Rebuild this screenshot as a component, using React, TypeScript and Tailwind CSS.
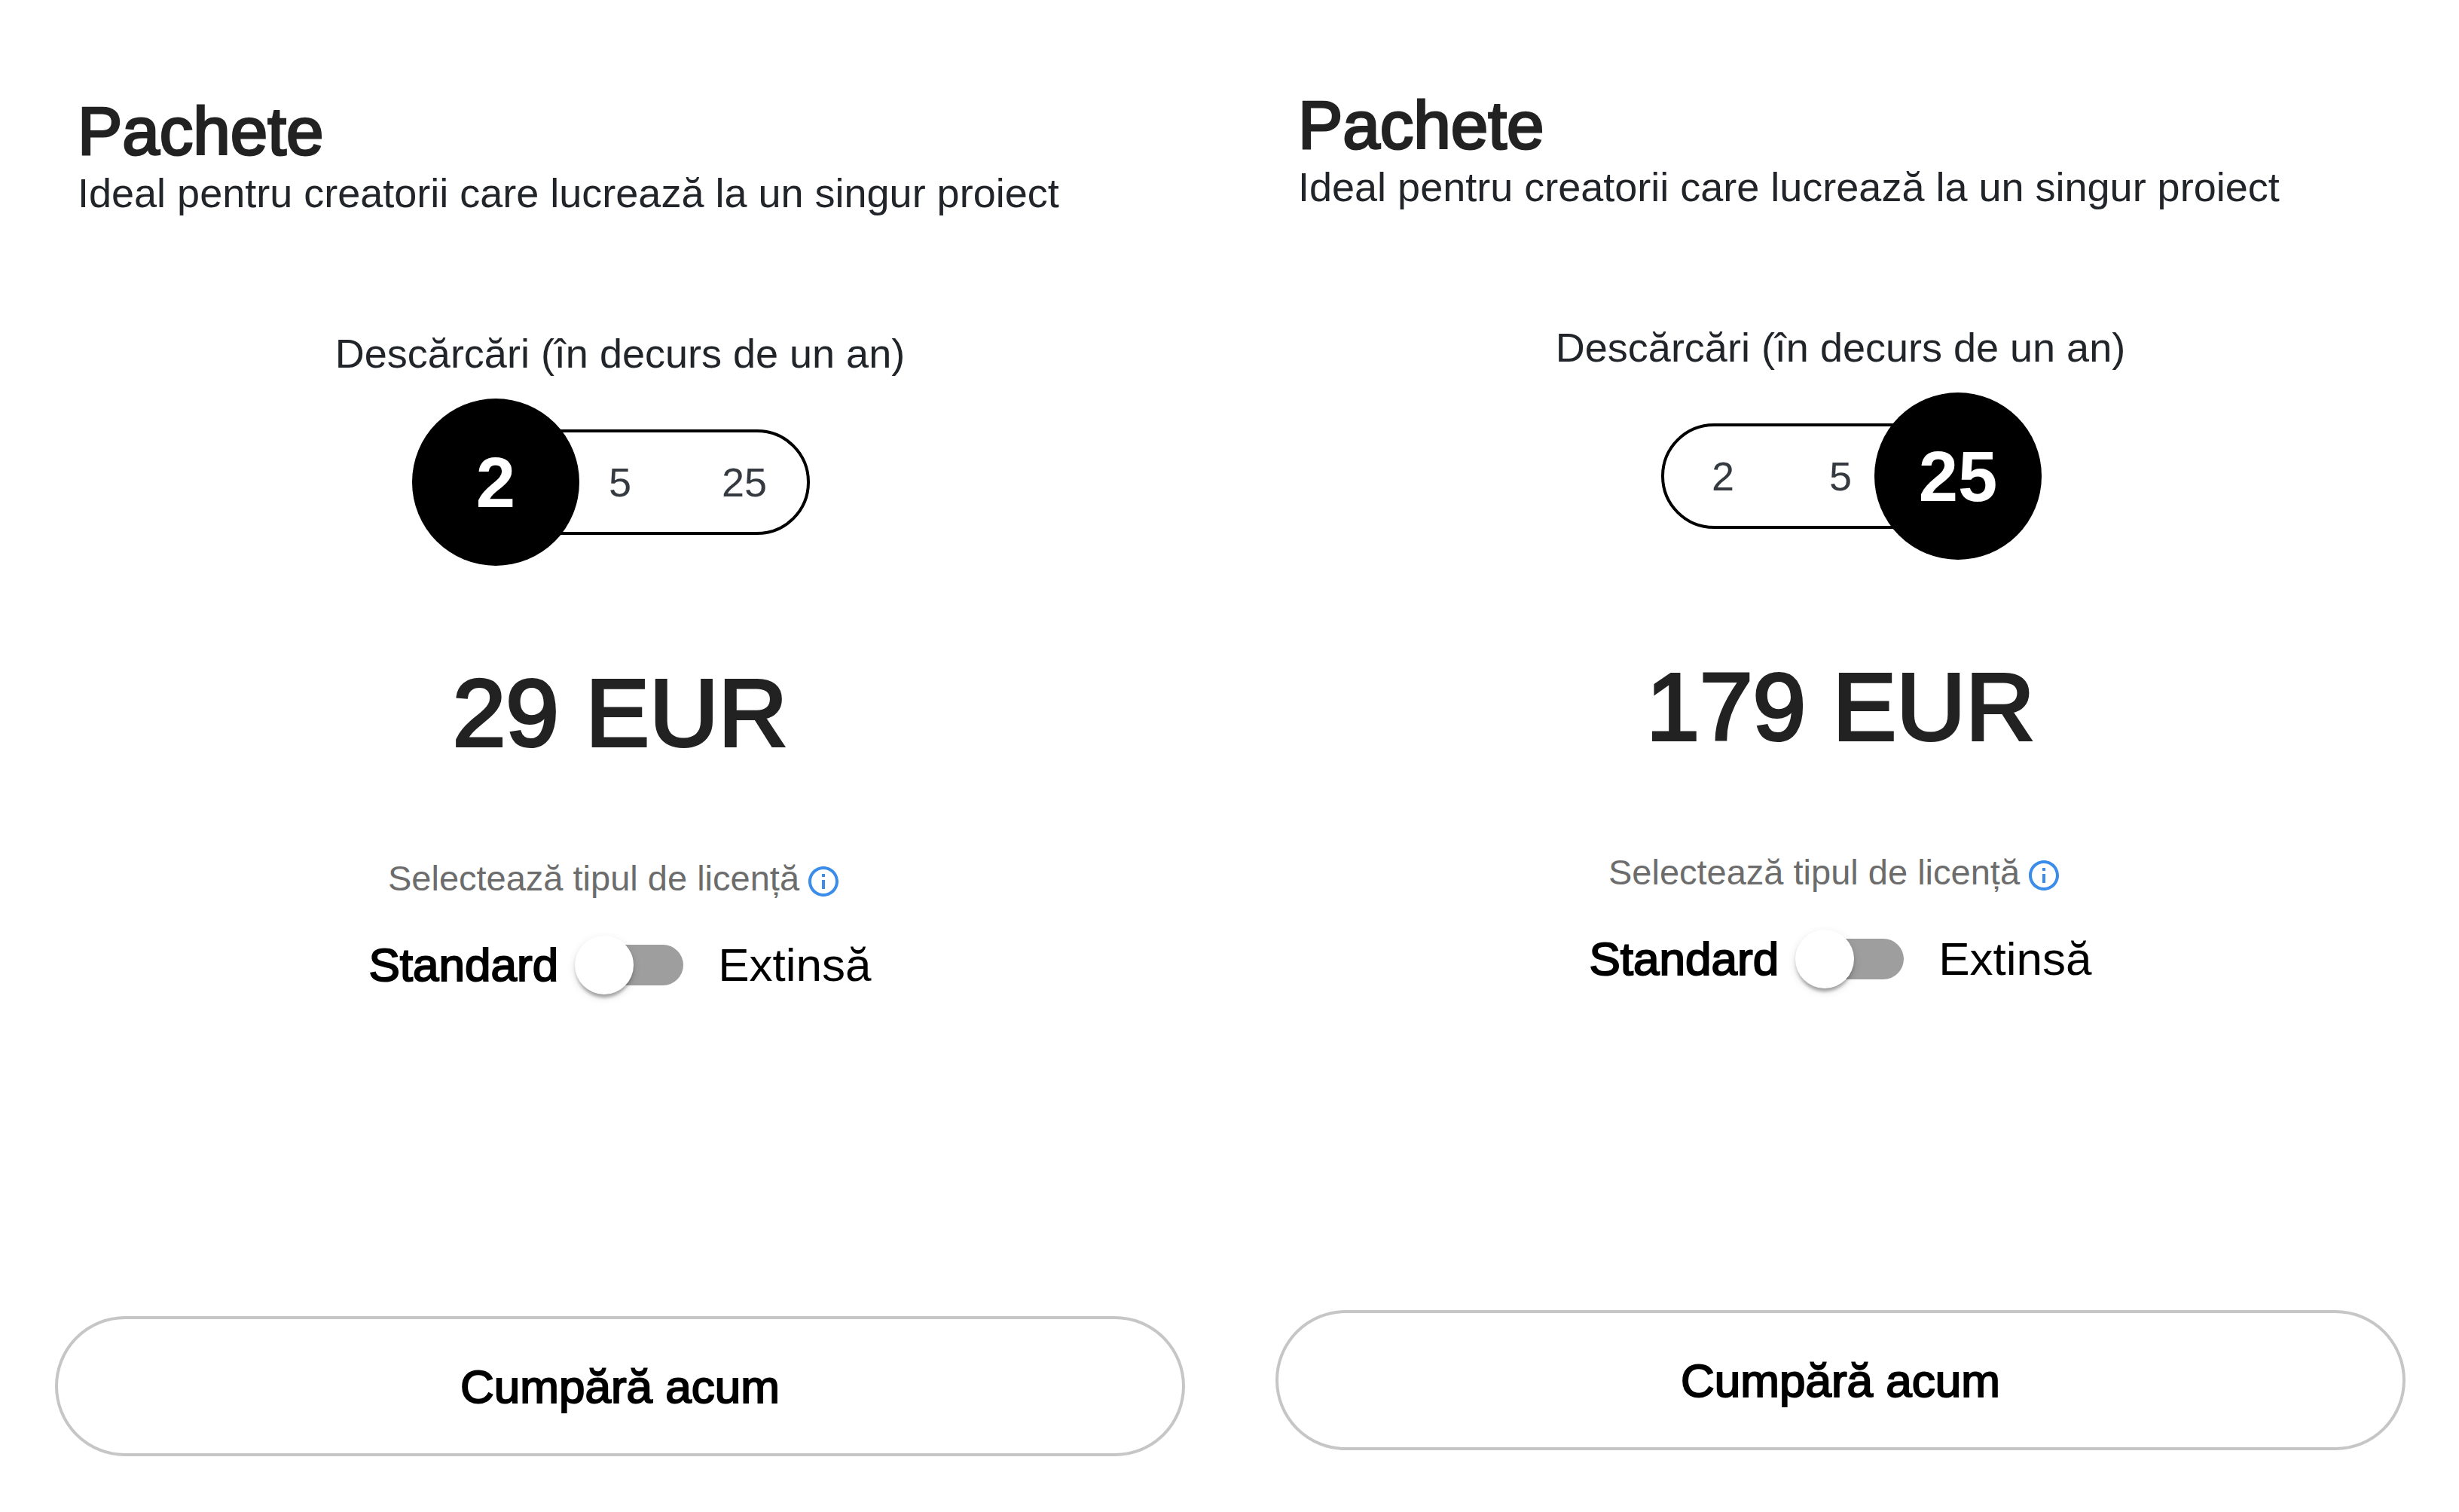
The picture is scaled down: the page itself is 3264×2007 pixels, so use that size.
import * as React from 'react';
import clsx from 'clsx';
import { MdInfoOutline } from 'react-icons/md';

interface Plan {
  id: string;
  downloads: number;
  cardClass: string;
  columnsClass: string;
}

const OPTIONS = [2, 5, 25];

const PRICES: Record<number, number> = { 2: 29, 5: 49, 25: 179 };

const PLANS: Plan[] = [
  { id: 'mic', downloads: 2, cardClass: 'pt-[124px]', columnsClass: 'grid-cols-[repeat(3,165px)]' },
  { id: 'mare', downloads: 25, cardClass: 'pt-[116px]', columnsClass: 'grid-cols-[repeat(3,156px)]' },
];

const DownloadPicker: React.FC<{
  name: string;
  value: number;
  columnsClass: string;
  onChange: (value: number) => void;
}> = ({ name, value, columnsClass, onChange }) => (
  <fieldset className="flex flex-col items-center">
    <legend className="mx-auto mb-[69px] text-[54px] leading-[64px] text-[#212529]">
      Descărcări (în decurs de un an)
    </legend>
    <div className={clsx('grid h-[140px] rounded-full border-4 border-black', columnsClass)}>
      {OPTIONS.map((option) => (
        <div key={option} className="flex min-h-0 items-center justify-center">
          <label
            className={clsx(
              'relative flex shrink-0 cursor-pointer items-center justify-center rounded-full',
              option === value
                ? 'z-10 size-[222px] bg-black text-[94px] font-bold text-white'
                : 'text-[54px] text-[#343a40]'
            )}
          >
            <input
              type="radio"
              name={name}
              value={option}
              checked={option === value}
              onChange={() => onChange(option)}
              className="sr-only"
            />
            {option}
          </label>
        </div>
      ))}
    </div>
  </fieldset>
);

const LicenseSwitch: React.FC<{ id: string }> = ({ id }) => {
  const [extended, setExtended] = React.useState(false);

  return (
    <div className="mt-[51px] flex items-center justify-center text-[62px] leading-[72px] text-black">
      <label htmlFor={id} className={clsx(!extended && '[-webkit-text-stroke:2px_black]')}>
        Standard
      </label>
      <input
        id={id}
        type="checkbox"
        role="switch"
        checked={extended}
        onChange={(e) => setExtended(e.target.checked)}
        className="relative mr-[46px] ml-[34px] h-[54px] w-[132px] cursor-pointer appearance-none rounded-full bg-[#9e9e9e] before:absolute before:-top-3 before:-left-3 before:size-[78px] before:rounded-full before:bg-white before:shadow-[0_8px_4px_-4px_rgba(0,0,0,0.2),0_4px_4px_rgba(0,0,0,0.14),0_4px_12px_rgba(0,0,0,0.12)] checked:before:left-16"
      />
      <label htmlFor={id} className={clsx(extended && '[-webkit-text-stroke:2px_black]')}>
        Extinsă
      </label>
    </div>
  );
};

const PlanCard: React.FC<{ plan: Plan }> = ({ plan }) => {
  const [downloads, setDownloads] = React.useState(plan.downloads);

  return (
    <section className={clsx('flex flex-col', plan.cardClass)}>
      <header className="mb-[149px] pl-[30px]">
        <h2 className="text-[89px] leading-[100px] text-[#222] [-webkit-text-stroke:3px_#222]">Pachete</h2>
        <p className="text-[54px] leading-[64px] text-[#212529]">
          Ideal pentru creatorii care lucrează la un singur proiect
        </p>
      </header>

      <DownloadPicker
        name={`descarcari-${plan.id}`}
        value={downloads}
        columnsClass={plan.columnsClass}
        onChange={setDownloads}
      />

      <p className="mt-[166px] text-center text-[127px] leading-[140px] text-[#222] [-webkit-text-stroke:4px_#222]">
        {PRICES[downloads]} EUR
      </p>

      <div className="mt-[122px] flex items-end justify-center gap-2 pr-3.5 text-[47px] leading-[56px] text-[#6c6c6c]">
        <span>Selectează tipul de licență</span>
        <button type="button" aria-label="Detalii despre licență" className="text-[#3b8de9]">
          <MdInfoOutline className="size-12" />
        </button>
      </div>

      <LicenseSwitch id={`licenta-${plan.id}`} />

      <button
        type="button"
        className="mt-[430px] h-[186px] w-full rounded-full border-4 border-[#c6c6c6] text-[62px] text-black [-webkit-text-stroke:2px_black]"
      >
        Cumpără acum
      </button>
    </section>
  );
};

const App: React.FC = () => (
  <main className="grid min-h-screen grid-cols-2 gap-x-[120px] bg-white pr-[71px] pl-[73px] font-['Liberation_Sans',Arial,sans-serif]">
    {PLANS.map((plan) => (
      <PlanCard key={plan.id} plan={plan} />
    ))}
  </main>
);

export default App;
